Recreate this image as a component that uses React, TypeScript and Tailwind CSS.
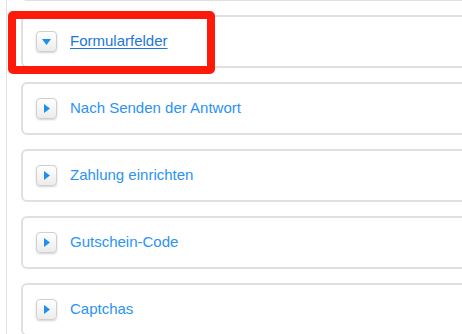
const sections = [
  { title: 'Formularfelder', open: true },
  { title: 'Nach Senden der Antwort', open: false },
  { title: 'Zahlung einrichten', open: false },
  { title: 'Gutschein-Code', open: false },
  { title: 'Captchas', open: false },
]

function Toggle({ open }: { open: boolean }) {
  return (
    <span className="flex h-[21px] w-[21px] shrink-0 items-center justify-center rounded-[4px] border border-[#d0d0d0] bg-gradient-to-b from-white to-[#ececec] shadow-[0_1px_2px_rgba(0,0,0,0.18)]">
      {open ? (
        <svg width="9" height="6" viewBox="0 0 9 6">
          <path d="M0 0h9L4.5 6z" fill="#1d8ef2" />
        </svg>
      ) : (
        <svg width="6" height="9" viewBox="0 0 6 9">
          <path d="M0 0v9l6-4.5z" fill="#1d8ef2" />
        </svg>
      )}
    </span>
  )
}

export default function App() {
  return (
    <div className="relative h-[334px] w-[462px] overflow-hidden bg-white font-['Liberation_Sans',Arial,sans-serif]">
      <div className="ml-[6px] flex h-full flex-col border-l border-[#e2e2e2] pl-[14px]">
        <div className="-mr-10 -mt-[52px] flex flex-col gap-[14px]">
          <div className="h-[53px] shrink-0 rounded-[6px] border-2 border-[#e0e0e0]" />
          {sections.map((s) => (
            <div
              key={s.title}
              className="flex h-[53px] shrink-0 items-center gap-[13px] rounded-[6px] border-2 border-[#e0e0e0] pl-[13px]"
            >
              <Toggle open={s.open} />
              <a
                href="#"
                className={
                  s.open
                    ? 'text-[15px] text-[#1c78d8] underline underline-offset-2'
                    : 'text-[15px] text-[#2a93f5]'
                }
              >
                {s.title}
              </a>
            </div>
          ))}
        </div>
      </div>
      <div className="absolute left-[8px] top-[11px] h-[63px] w-[207px] rounded-[5px] border-[8px] border-[#fe1a0a]" />
    </div>
  )
}
